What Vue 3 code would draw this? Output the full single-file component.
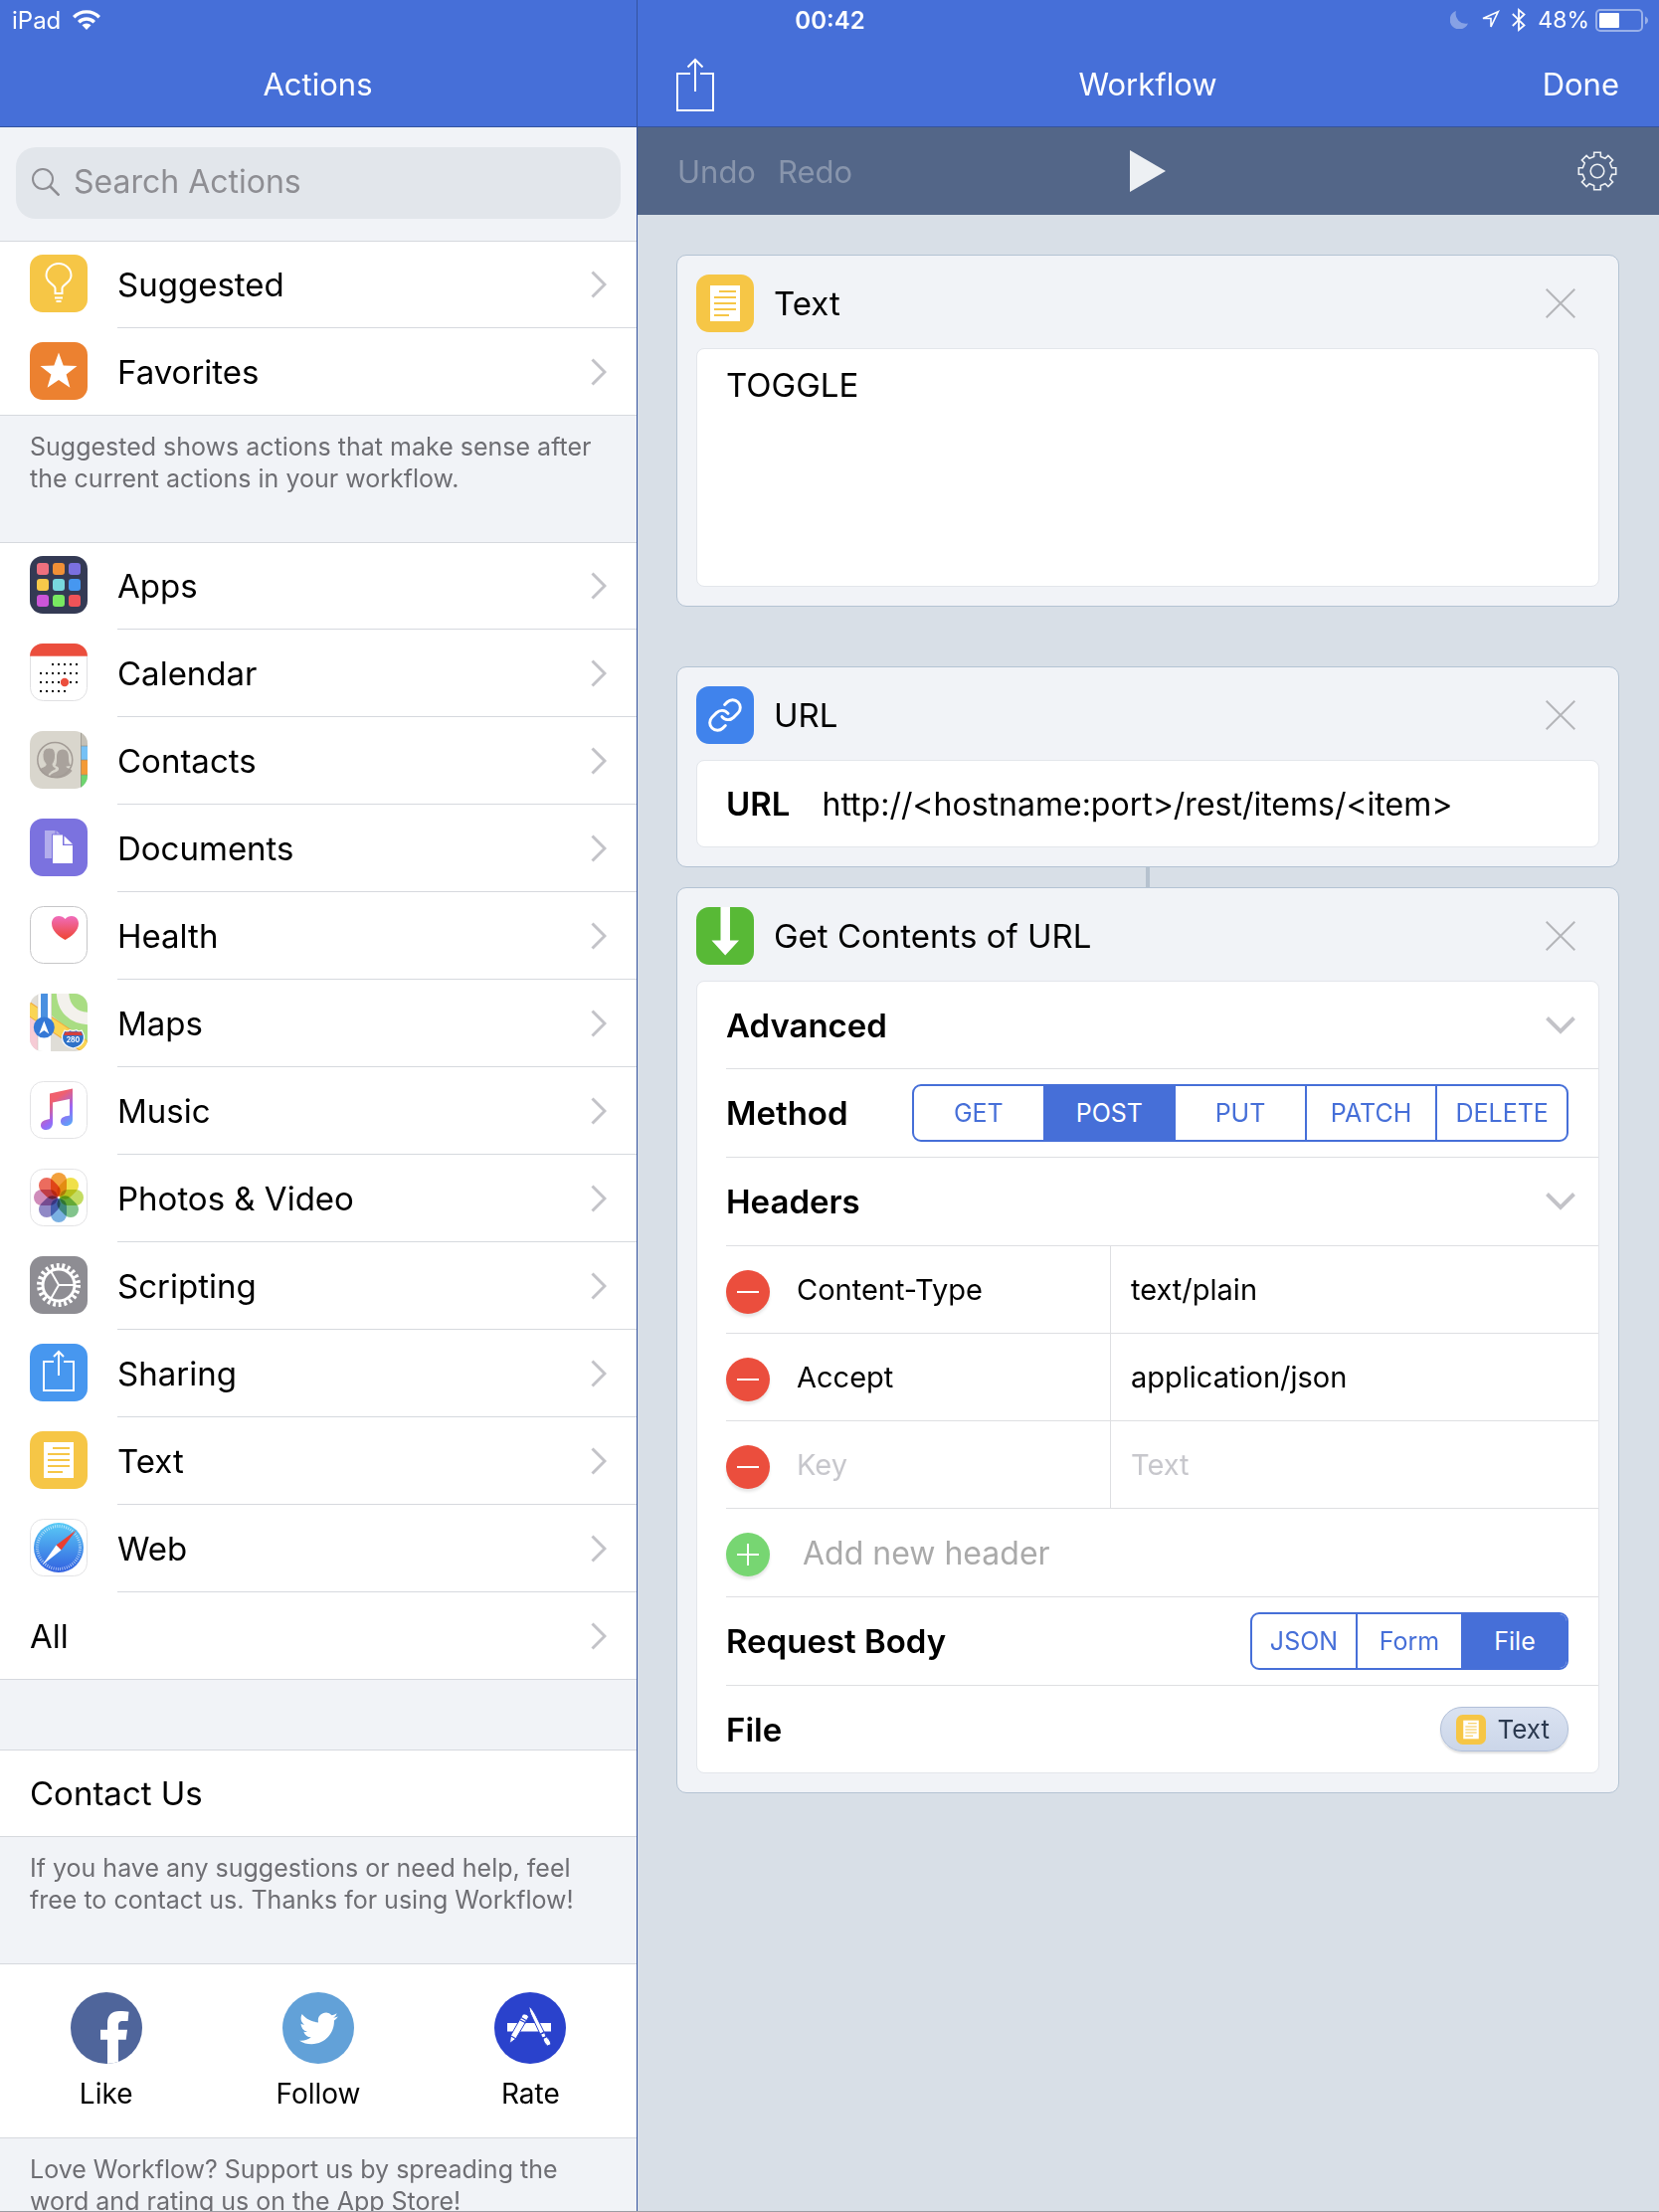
<template>
  <!-- Icon sprite -->
  <svg class="sprite" aria-hidden="true">
    <defs>
      <linearGradient id="g-heart" x1="0" y1="0" x2="0" y2="1">
        <stop offset="0" stop-color="#f06cbc" />
        <stop offset="1" stop-color="#ee4530" />
      </linearGradient>
      <linearGradient id="g-note" x1="0.2" y1="0.1" x2="0.7" y2="1">
        <stop offset="0.25" stop-color="#f0606e" />
        <stop offset="0.65" stop-color="#9a66f5" />
        <stop offset="1" stop-color="#5aa5f8" />
      </linearGradient>
      <linearGradient id="g-safari" x1="0" y1="0" x2="0" y2="1">
        <stop offset="0" stop-color="#5accf6" />
        <stop offset="1" stop-color="#3260e0" />
      </linearGradient>
      <clipPath id="tile"><rect width="58" height="58" rx="13" /></clipPath>
      <clipPath id="disc"><circle cx="36" cy="36" r="36" /></clipPath>
    </defs>

    <symbol id="i-suggested" viewBox="0 0 58 58">
      <rect width="58" height="58" rx="13" fill="#f6c646" />
      <g fill="none" stroke="#fff" stroke-width="2">
        <path d="M25.5 39v-5c0-4-9-5.5-9-13a12.5 12 0 0 1 25 0c0 7.5-9 9-9 13v5z" />
        <path d="M25 43.5h8M26.5 47h5" />
      </g>
    </symbol>
    <symbol id="i-favorites" viewBox="0 0 58 58">
      <rect width="58" height="58" rx="13" fill="#ec8130" />
      <path fill="#fff" d="M29 10.5l4.7 12.9 13.8.5-10.9 8.5 3.8 13.4L29 38l-11.4 7.8 3.8-13.4-10.9-8.5 13.8-.5z" />
    </symbol>
    <symbol id="i-apps" viewBox="0 0 58 58">
      <rect width="58" height="58" rx="13" fill="#343a54" />
      <rect x="7" y="7" width="12" height="12" rx="3" fill="#ef707e" />
      <rect x="23" y="7" width="12" height="12" rx="3" fill="#f09036" />
      <rect x="39" y="7" width="12" height="12" rx="3" fill="#7b70e0" />
      <rect x="7" y="23" width="12" height="12" rx="3" fill="#f7c94a" />
      <rect x="23" y="23" width="12" height="12" rx="3" fill="#78d8de" />
      <rect x="39" y="23" width="12" height="12" rx="3" fill="#4697f0" />
      <rect x="7" y="39" width="12" height="12" rx="3" fill="#cc55d8" />
      <rect x="23" y="39" width="12" height="12" rx="3" fill="#79e861" />
      <rect x="39" y="39" width="12" height="12" rx="3" fill="#ef5358" />
    </symbol>
    <symbol id="i-calendar" viewBox="0 0 58 58">
      <rect x=".5" y=".5" width="57" height="57" rx="13" fill="#fff" stroke="#e0e0e2" />
      <g clip-path="url(#tile)">
        <rect width="58" height="12.7" fill="#eb4e3d" />
      </g>
      <g stroke="#000" stroke-width="2" stroke-dasharray="2 4">
        <path d="M22 21h26" />
        <path d="M10 30h38" />
        <path d="M10 39h38" />
        <path d="M10 48h26" />
      </g>
      <circle cx="35" cy="39" r="4.2" fill="#eb4e3d" />
    </symbol>
    <symbol id="i-contacts" viewBox="0 0 58 58">
      <g clip-path="url(#tile)">
        <rect width="58" height="58" fill="#d9d6cd" />
        <rect x="51" width="7" height="15" fill="#c4c0b6" />
        <rect x="51" y="15" width="7" height="14" fill="#76c1f5" />
        <rect x="51" y="29" width="7" height="15" fill="#f39a36" />
        <rect x="51" y="44" width="7" height="14" fill="#6dd56f" />
        <path d="M51.5 0v58M51 15h7M51 29h7M51 44h7" stroke="#8c8980" stroke-opacity=".6" />
      </g>
      <path fill="#a9a29c" d="M33 18.5c5 0 6 4 6 8 0 5 1 7 2.5 8.5l-5 .5c0 2 5 2 6 4.500A18 18 0 0 1 20 45.500c1-4 8-3.500 9-7 .5-1-.5-3-3.500-3.500 1.500-2 1.500-5 1.500-8.500 0-4 1-8 6-8z" />
      <path fill="#a9a29c" stroke="#d9d6cd" d="M19.500 17c5 0 6 3.500 6 8 0 3-.8 6-2.500 8 0 3 2 3.500 4.500 5-4 2-8 3-9 8-4.500-1.500-7.500-4-9.500-7.500 2-2 6-2.500 7-4 .5-1-.2-2-.7-2.500-1.500-2-2.300-4-2.300-7 0-4.500 1.500-8 6.500-8z" />
      <circle cx="25.3" cy="29" r="17.5" fill="none" stroke="#a39c96" stroke-width="1.5" />
    </symbol>
    <symbol id="i-documents" viewBox="0 0 58 58">
      <rect width="58" height="58" rx="13" fill="#7b72df" />
      <path fill="#fff" fill-opacity=".42" d="M15 12h10.500v3.500H22V40h-7zM26.500 12l4 3.500h-4z" />
      <path fill="#fff" d="M23 16.500h10V27h10v18H23z" />
      <path fill="#fff" d="M34.500 17.500l8.500 8.200h-8.500z" />
    </symbol>
    <symbol id="i-health" viewBox="0 0 58 58">
      <rect x=".5" y=".5" width="57" height="57" rx="13" fill="#fff" stroke="#c6c6c8" />
      <path fill="url(#g-heart)" d="M35.500 34C29 30.500 22 25 22 17.500 22 13 25 10 29 10c2.500 0 5 1 6.500 3 1.500-2 4-3 6.500-3 4 0 7 3 7 7.500C49 25 42 30.500 35.500 34z" />
    </symbol>
    <symbol id="i-maps" viewBox="0 0 58 58">
      <g clip-path="url(#tile)">
        <rect width="58" height="58" fill="#dfddd7" />
        <path fill="#f6cbd5" d="M0 24l8 5v29H0z" />
        <path fill="#a9dd83" d="M22 0h36v52L22 22z" />
        <path fill="none" stroke="#f3f1ec" stroke-width="12.5" d="M33 -2c0 17 11 27 27 27" />
        <path fill="none" stroke="#f0a93a" stroke-width="13" d="M-3 14L58 55" />
        <path fill="none" stroke="#fad554" stroke-width="11" d="M-3 14L58 55" />
        <rect x="8" width="14" height="58" fill="#fff" />
        <rect x="11" width="7" height="32" fill="#4a90e0" />
        <path d="M8 0v58M21.5 0v58" stroke="#c9c7c0" stroke-width=".6" />
      </g>
      <circle cx="14.3" cy="34" r="10.5" fill="#3478d6" />
      <path fill="#fff" d="M14.300 27.500l5 13-5-3.500-5 3.500z" />
      <path fill="#2f72c8" stroke="#fff" stroke-width="1.2" d="M35 37c2 1 4 1 5-.5 2 1 5 1 7 0 1 1.500 3 1.500 5 .5 1 2 3 4 2.500 8-.5 6-6 9-11 10-5-1-10.500-4-11-10-.5-4 1.500-6 2.500-8z" />
      <path fill="#d5403c" d="M35.500 38.500h16l1.500 3.500H34z" />
      <text x="43.5" y="49" text-anchor="middle" font-size="7" font-weight="700" fill="#fff">280</text>
    </symbol>
    <symbol id="i-music" viewBox="0 0 58 58">
      <rect x=".5" y=".5" width="57" height="57" rx="13" fill="#fff" stroke="#e3e3e5" />
      <path fill="url(#g-note)" d="M20 12.500L43 7.500V39c0 3.500-3 6-6.500 6-3 0-5.500-1.500-5.500-4.500 0-3.500 2.500-5 9-6V18l-17 3.500V42c0 4-2.500 7-6.500 7-3.500 0-5.500-2-5.500-4.500 0-4 3-5.500 9-6.500z" />
    </symbol>
    <symbol id="i-photos" viewBox="0 0 58 58">
      <rect x=".5" y=".5" width="57" height="57" rx="13" fill="#fff" stroke="#e3e3e5" />
      <g transform="translate(29 29)">
        <rect
          v-for="(color, i) in petals"
          :key="color"
          class="petal"
          x="-8"
          y="-25"
          width="16"
          height="24"
          rx="8"
          :fill="color"
          :transform="`rotate(${i * 45})`"
        />
      </g>
    </symbol>
    <symbol id="i-scripting" viewBox="0 0 58 58">
      <rect width="58" height="58" rx="13" fill="#8e8d93" />
      <g fill="none" stroke="#fff">
        <circle cx="29" cy="29" r="19.5" stroke-width="5" stroke-dasharray="2.800 2.769" />
        <circle cx="29" cy="29" r="16" stroke-width="3" />
        <path stroke-width="2" d="M29 29h16M29 29l-8-13.900M29 29l-8 13.900" />
      </g>
    </symbol>
    <symbol id="i-sharing" viewBox="0 0 58 58">
      <rect width="58" height="58" rx="13" fill="#4797ef" />
      <path fill="none" stroke="#fff" stroke-width="2" d="M24 18H14v29h30V18H34M29 32V8.500M24 13l5-5 5 5" />
    </symbol>
    <symbol id="i-text" viewBox="0 0 58 58">
      <rect width="58" height="58" rx="13" fill="#f6c646" />
      <path fill="#fff" d="M14 11h30v36H14z" />
      <path stroke="#f6c646" stroke-width="2" d="M23 17h17M18 23h22M18 29h22M18 35h22M18 41h15" />
    </symbol>
    <symbol id="i-web" viewBox="0 0 58 58">
      <rect x=".5" y=".5" width="57" height="57" rx="13" fill="#fff" stroke="#e3e3e5" />
      <circle cx="29" cy="29" r="25" fill="url(#g-safari)" />
      <circle cx="29" cy="29" r="21.5" fill="none" stroke="#fff" stroke-opacity=".75" stroke-width="3" stroke-dasharray=".7 1.552" />
      <path fill="#eb3e31" d="M46.500 11.500L31.500 31.500l-5-5z" />
      <path fill="#fff" d="M12.500 46.500l14-20 5 5z" />
    </symbol>
    <symbol id="i-url" viewBox="0 0 58 58">
      <rect width="58" height="58" rx="13" fill="#4083ec" />
      <g transform="translate(10.5 10.5) scale(1.54)" fill="none" stroke="#fff" stroke-width="1.9" stroke-linecap="round">
        <path d="M10 13a5 5 0 0 0 7.540.54l3-3a5 5 0 0 0-7.070-7.070l-1.720 1.710" />
        <path d="M14 11a5 5 0 0 0-7.540-.54l-3 3a5 5 0 0 0 7.070 7.070l1.710-1.710" />
      </g>
    </symbol>
    <symbol id="i-download" viewBox="0 0 58 58">
      <rect width="58" height="58" rx="13" fill="#58b936" />
      <path fill="#fff" d="M24.500 0h9.500v33.500h9L29.200 48.500 15.500 33.500h9z" />
    </symbol>
    <symbol id="i-facebook" viewBox="0 0 72 72">
      <g clip-path="url(#disc)">
        <rect width="72" height="72" fill="#4f659b" />
        <path fill="#fff" d="M37 72V47.700h-7v-10h7V31c0-8 4.500-12 12-12 4 0 8 .4 9.500.7l-.9 9.300h-4.600c-4 0-5 1.500-5 4.500v4.200h9l-1.300 10H48V72z" />
      </g>
    </symbol>
    <symbol id="i-twitter" viewBox="0 0 72 72">
      <circle cx="36" cy="36" r="36" fill="#62a1d8" />
      <path
        fill="#fff"
        transform="translate(17 17) scale(1.62)"
        d="M23.953 4.570a10 10 0 01-2.825.775 4.958 4.958 0 002.163-2.723c-.951.555-2.005.959-3.127 1.184a4.920 4.920 0 00-8.384 4.482C7.690 8.095 4.067 6.130 1.640 3.162a4.822 4.822 0 00-.666 2.475c0 1.710.87 3.213 2.188 4.096a4.904 4.904 0 01-2.228-.616v.06a4.923 4.923 0 003.946 4.827 4.996 4.996 0 01-2.212.085 4.936 4.936 0 004.604 3.417 9.867 9.867 0 01-6.102 2.105c-.39 0-.779-.023-1.170-.067a13.995 13.995 0 007.557 2.209c9.053 0 13.998-7.496 13.998-13.985 0-.21 0-.42-.015-.63A9.935 9.935 0 0024 4.590z"
      />
    </symbol>
    <symbol id="i-appstore" viewBox="0 0 72 72">
      <circle cx="36" cy="36" r="36" fill="#2a42cc" />
      <path fill="#fff" d="M13 31h44v8.500H13z" />
      <g fill="#fff" stroke="#2a42cc">
        <path d="M35 14c3 3 5 6 7 10l8 16-4 2-8-17c-2-4-3-7-3-11z" />
        <path d="M46.500 42.500l4-2 1.500 4-3.500 1.500zM49 46.500l3.500-1.500c2 1.500 4 4 4.500 7.500l-3.500 1.500c-2.500-2-4-4-4.500-7.500z" />
        <path d="M28.500 22.500c1.500-1.500 5.500 0 6 2.500L21.500 47l-6 4.500 1-8z" />
        <path fill="none" stroke-width="1.2" d="M27 25.500l6 3.500M16 43.500l6 3.500M26 28l6 3" />
      </g>
    </symbol>
  </svg>

  <div class="app">
    <div class="status-bar">
      <div class="status-left">
        <span>iPad</span>
        <svg width="28" height="20" viewBox="0 0 28 20">
          <path fill="#fff" d="M14 20l-4.500-4.700a6.300 6.300 0 0 1 9 0z" />
          <path fill="none" stroke="#fff" stroke-width="3.4" d="M6.200 12.300a11 11 0 0 1 15.600 0M1.200 7.200a18 18 0 0 1 25.600 0" />
        </svg>
      </div>
      <span class="clock">00:42</span>
      <div class="status-right">
        <svg width="18" height="18" viewBox="0 0 18 18">
          <path fill="#fff" fill-opacity=".35" d="M6 0a10 10 0 0 0 12 12.500A9.500 9.500 0 1 1 6 0z" />
        </svg>
        <svg width="20" height="20" viewBox="0 0 20 20">
          <path fill="none" stroke="#fff" stroke-width="1.6" d="M18.300 1.700L3 8.500h8v8.500z" />
        </svg>
        <svg width="14" height="24" viewBox="0 0 14 24">
          <path fill="none" stroke="#fff" stroke-width="1.8" d="M.8 6L12.500 17.500 7 22V2l5.500 4.500L.8 18" />
        </svg>
        <span>48%</span>
        <svg width="53" height="23" viewBox="0 0 53 23">
          <rect x="1" y="1" width="46" height="21" rx="4" fill="none" stroke="#fff" stroke-opacity=".45" stroke-width="2" />
          <rect x="4" y="4" width="20" height="15" rx="1" fill="#fff" />
          <path fill="#fff" fill-opacity=".45" d="M50 7.500c4 1.500 4 6.500 0 8z" />
        </svg>
      </div>
    </div>

    <aside class="sidebar">
      <header class="nav-bar">
        <h1>Actions</h1>
      </header>
      <div class="search">
        <label class="search-box">
          <svg width="28" height="28" viewBox="0 0 28 28">
            <circle cx="11" cy="11" r="10" fill="none" stroke="#8e8e93" stroke-width="2" />
            <path stroke="#8e8e93" stroke-width="2.6" d="M18 18l9.500 9.500" />
          </svg>
          <input v-model="query" type="search" placeholder="Search Actions" aria-label="Search Actions" />
        </label>
      </div>

      <nav class="group">
        <a v-for="item in shortcuts" :key="item.id" class="row" href="#">
          <svg class="tile"><use :href="`#i-${item.id}`" /></svg>
          <span class="row-body">
            {{ item.label }}
            <svg class="chevron" viewBox="0 0 16 28"><path d="M1.500 1.500L14 14 1.500 26.500" /></svg>
          </span>
        </a>
      </nav>
      <p class="note">Suggested shows actions that make sense after the current actions in your workflow.</p>

      <nav class="group">
        <a v-for="item in categories" :key="item.id" class="row" href="#">
          <svg class="tile"><use :href="`#i-${item.id}`" /></svg>
          <span class="row-body">
            {{ item.label }}
            <svg class="chevron" viewBox="0 0 16 28"><path d="M1.500 1.500L14 14 1.500 26.500" /></svg>
          </span>
        </a>
        <a class="row" href="#">
          <span class="row-body">
            All
            <svg class="chevron" viewBox="0 0 16 28"><path d="M1.500 1.500L14 14 1.500 26.500" /></svg>
          </span>
        </a>
      </nav>

      <div class="group contact">
        <a class="row" href="#"><span class="row-body">Contact Us</span></a>
      </div>
      <p class="note">If you have any suggestions or need help, feel free to contact us. Thanks for using Workflow!</p>

      <div class="social">
        <a v-for="s in social" :key="s.icon" href="#">
          <svg><use :href="`#i-${s.icon}`" /></svg>
          {{ s.label }}
        </a>
      </div>
      <p class="note">Love Workflow? Support us by spreading the word and rating us on the App Store!</p>
    </aside>

    <main class="editor">
      <header class="nav-bar">
        <button class="nav-btn" aria-label="Share">
          <svg width="38" height="54" viewBox="0 0 38 54">
            <path fill="none" stroke="#fff" stroke-width="2" d="M14 16H1v37h36V16H24M19 34V2M11.500 9.500L19 2l7.500 7.500" />
          </svg>
        </button>
        <h1>Workflow</h1>
        <button class="nav-btn">Done</button>
      </header>
      <div class="toolbar">
        <div class="history">
          <button disabled>Undo</button>
          <button disabled>Redo</button>
        </div>
        <button aria-label="Run">
          <svg width="36" height="42" viewBox="0 0 36 42"><path fill="#edf0f3" d="M0 0l36 21L0 42z" /></svg>
        </button>
        <button class="settings" aria-label="Settings">
          <svg width="40" height="40" viewBox="0 0 40 40">
            <g fill="none" stroke="#edf0f3" stroke-width="1.6">
              <path :d="gearPath" />
              <circle cx="20" cy="20" r="6.8" />
            </g>
          </svg>
        </button>
      </div>

      <div class="canvas">
        <section class="card">
          <header>
            <svg class="tile"><use href="#i-text" /></svg>
            <h2>Text</h2>
            <button class="close" aria-label="Remove Text">
              <svg viewBox="0 0 30 30"><path d="M.7.7l28.600 28.600M29.300.7L.7 29.300" /></svg>
            </button>
          </header>
          <textarea v-model="text" class="panel" aria-label="Text"></textarea>
        </section>

        <section class="card spaced">
          <header>
            <svg class="tile"><use href="#i-url" /></svg>
            <h2>URL</h2>
            <button class="close" aria-label="Remove URL">
              <svg viewBox="0 0 30 30"><path d="M.7.7l28.600 28.600M29.300.7L.7 29.300" /></svg>
            </button>
          </header>
          <div class="panel">
            <div class="field">
              <label for="url">URL</label>
              <input id="url" v-model="url" type="text" />
            </div>
          </div>
        </section>

        <div class="connector"></div>

        <section class="card">
          <header>
            <svg class="tile"><use href="#i-download" /></svg>
            <h2>Get Contents of URL</h2>
            <button class="close" aria-label="Remove Get Contents of URL">
              <svg viewBox="0 0 30 30"><path d="M.7.7l28.600 28.600M29.300.7L.7 29.300" /></svg>
            </button>
          </header>
          <div class="panel">
            <button class="field">
              <b>Advanced</b>
              <svg class="expand" viewBox="0 0 30 18"><path d="M1.500 1.500L15 15 28.500 1.500" /></svg>
            </button>
            <div class="field tall">
              <b>Method</b>
              <div class="segmented" role="radiogroup" aria-label="Method">
                <label v-for="m in methods" :key="m">
                  <input v-model="method" type="radio" name="method" :value="m" />
                  <span>{{ m }}</span>
                </label>
              </div>
            </div>
            <button class="field tall">
              <b>Headers</b>
              <svg class="expand" viewBox="0 0 30 18"><path d="M1.500 1.500L15 15 28.500 1.500" /></svg>
            </button>
            <div v-for="(h, i) in headers" :key="i" class="field pair">
              <button class="round remove" aria-label="Remove header" @click="removeHeader(i)">
                <svg viewBox="0 0 44 44"><path d="M11 22h22" /></svg>
              </button>
              <input v-model="h.key" type="text" class="key" placeholder="Key" aria-label="Key" />
              <input v-model="h.value" type="text" class="value" placeholder="Text" aria-label="Text" />
            </div>
            <button class="field tall add" @click="addHeader">
              <span class="round">
                <svg viewBox="0 0 44 44"><path d="M11 22h22M22 11v22" /></svg>
              </span>
              Add new header
            </button>
            <div class="field tall">
              <b>Request Body</b>
              <div class="segmented small" role="radiogroup" aria-label="Request Body">
                <label v-for="b in bodies" :key="b">
                  <input v-model="body" type="radio" name="body" :value="b" />
                  <span>{{ b }}</span>
                </label>
              </div>
            </div>
            <div class="field">
              <b>File</b>
              <button class="token">
                <svg><use href="#i-text" /></svg>
                Text
              </button>
            </div>
          </div>
        </section>
      </div>
    </main>
  </div>
</template>

<script setup>
import { ref } from 'vue'

const query = ref('')
const text = ref('TOGGLE')
const url = ref('http://<hostname:port>/rest/items/<item>')

const shortcuts = [
  { id: 'suggested', label: 'Suggested' },
  { id: 'favorites', label: 'Favorites' }
]

const categories = [
  { id: 'apps', label: 'Apps' },
  { id: 'calendar', label: 'Calendar' },
  { id: 'contacts', label: 'Contacts' },
  { id: 'documents', label: 'Documents' },
  { id: 'health', label: 'Health' },
  { id: 'maps', label: 'Maps' },
  { id: 'music', label: 'Music' },
  { id: 'photos', label: 'Photos & Video' },
  { id: 'scripting', label: 'Scripting' },
  { id: 'sharing', label: 'Sharing' },
  { id: 'text', label: 'Text' },
  { id: 'web', label: 'Web' }
]

const social = [
  { icon: 'facebook', label: 'Like' },
  { icon: 'twitter', label: 'Follow' },
  { icon: 'appstore', label: 'Rate' }
]

const methods = ['GET', 'POST', 'PUT', 'PATCH', 'DELETE']
const method = ref('POST')
const bodies = ['JSON', 'Form', 'File']
const body = ref('File')

const headers = ref([
  { key: 'Content-Type', value: 'text/plain' },
  { key: 'Accept', value: 'application/json' },
  { key: '', value: '' }
])

function addHeader() {
  headers.value.push({ key: '', value: '' })
}

function removeHeader(index) {
  headers.value.splice(index, 1)
}

// Photos icon, clockwise from the top
const petals = ['#f2a03c', '#f0e04a', '#c3dc62', '#82c48c', '#7ab0e2', '#9089c6', '#cf8cba', '#ec6c5e']

// Settings gear: 8 square teeth around a 40x40 box
const gearPath = buildGear(8, 19, 15)

function buildGear(teeth, outer, inner) {
  const points = []
  for (let i = 0; i < teeth; i++) {
    const mid = (i * 360) / teeth - 90
    for (const [offset, radius] of [[-13, inner], [-10, outer], [10, outer], [13, inner]]) {
      const a = ((mid + offset) * Math.PI) / 180
      points.push(`${(20 + radius * Math.cos(a)).toFixed(2)} ${(20 + radius * Math.sin(a)).toFixed(2)}`)
    }
  }
  return `M${points.join('L')}z`
}
</script>

<style>
body {
  margin: 0;
}
</style>

<style scoped>
* {
  box-sizing: border-box;
}

.sprite {
  position: absolute;
  width: 0;
  height: 0;
}
.petal {
  mix-blend-mode: multiply;
}

.app {
  position: relative;
  display: grid;
  grid-template-columns: 641px 1fr;
  height: 100vh;
  overflow: hidden;
  border-bottom: 1px solid #9b9da3;
  font-family: Inter, 'Liberation Sans', sans-serif;
  font-size: 33px;
  color: #000;
}
button,
input,
textarea {
  font: inherit;
  color: inherit;
  background: none;
  border: none;
  border-radius: 0;
  padding: 0;
  margin: 0;
  outline: none;
  appearance: none;
}
a {
  color: inherit;
  text-decoration: none;
}
svg {
  display: block;
  flex: none;
}
h1,
h2 {
  margin: 0;
  font-size: inherit;
  font-weight: 400;
}
b {
  font-weight: 600;
}

/* Status bar lies over both nav bars */
.status-bar {
  position: absolute;
  top: 0;
  left: 0;
  right: 0;
  height: 40px;
  padding: 0 11px 0 12px;
  display: grid;
  grid-template-columns: 1fr auto 1fr;
  align-items: center;
  color: #fff;
  font-size: 24px;
}
.status-left,
.status-right {
  display: flex;
  align-items: center;
  gap: 12px;
}
.status-right {
  justify-content: flex-end;
  font-size: 23px;
}
.status-right span {
  margin-right: -6px;
}
.clock {
  font-weight: 600;
}

.nav-bar {
  display: flex;
  align-items: center;
  justify-content: center;
  height: 128px;
  padding: 42px 40px 0 39px;
  background: #466fd8;
  border-bottom: 1px solid #34539f;
  font-size: 31px;
  color: #fff;
}

/* Sidebar */
.sidebar {
  background: #f1f3f7;
  border-right: 1px solid #34539f;
  overflow: hidden;
}
.search {
  padding: 20px 16px 22px;
}
.search-box {
  display: flex;
  align-items: center;
  gap: 14px;
  height: 72px;
  padding: 0 16px 3px;
  border-radius: 20px;
  background: #e2e6eb;
  font-size: 32px;
}
.search-box input {
  flex: 1;
  min-width: 0;
}
.search-box input::placeholder {
  color: #8e8e93;
}
.group {
  background: #fff;
}
.row {
  display: flex;
  align-items: center;
  gap: 30px;
  height: 88px;
  padding-left: 30px;
}
.row:first-child {
  box-shadow: inset 0 1px #d6d9de;
}
.row-body {
  flex: 1;
  align-self: stretch;
  display: flex;
  align-items: center;
  justify-content: space-between;
  padding-right: 30px;
  border-bottom: 1px solid #d6d9de;
}
.row:last-child {
  border-bottom: 1px solid #d6d9de;
}
.row:last-child .row-body {
  border-bottom: none;
}
.tile {
  width: 58px;
  height: 58px;
}
.row .tile {
  margin-bottom: 2px;
}
.chevron {
  width: 16px;
  height: 28px;
}
.chevron path,
.expand path {
  fill: none;
  stroke: #c3c3c8;
  stroke-width: 3;
}
.note {
  height: 127px;
  margin: 0;
  padding: 15px 30px 0;
  font-size: 25px;
  line-height: 32px;
  color: #6e6e73;
}
.contact {
  margin-top: 70px;
}
.social {
  display: grid;
  grid-template-columns: repeat(3, 1fr);
  height: 176px;
  padding-top: 28px;
  background: #fff;
  border-top: 1px solid #d6d9de;
  border-bottom: 1px solid #d6d9de;
  font-size: 28px;
}
.social a {
  display: flex;
  flex-direction: column;
  align-items: center;
  gap: 14px;
  line-height: 32px;
}
.social svg {
  width: 72px;
  height: 72px;
}

/* Editor */
.editor {
  display: flex;
  flex-direction: column;
  min-width: 0;
  background: #d8dfe7;
}
.editor .nav-bar,
.toolbar {
  flex: none;
  display: grid;
  grid-template-columns: 1fr auto 1fr;
  align-items: center;
}
.nav-btn:last-child,
.settings {
  justify-self: end;
}
.nav-btn:first-child {
  justify-self: start;
}
.toolbar {
  height: 88px;
  padding: 0 42px 0 40px;
  background: #536688;
  font-size: 31px;
}
.history {
  display: flex;
  gap: 22px;
  color: #8895ac;
}
.canvas {
  flex: 1;
  padding: 40px 40px 40px 39px;
  overflow: hidden;
}
.card {
  padding: 0 19px 19px;
  background: #f1f3f7;
  border: 1px solid #b4c3d3;
  border-radius: 10px;
}
.card.spaced {
  margin-top: 60px;
}
.card header {
  display: flex;
  align-items: center;
  gap: 20px;
  height: 93px;
  padding-top: 3px;
}
.card h2 {
  flex: 1;
}
.close {
  padding: 0 24px;
}
.close svg {
  width: 30px;
  height: 30px;
}
.close path {
  fill: none;
  stroke: #b4b5b9;
  stroke-width: 2;
}
.panel {
  display: block;
  width: 100%;
  background: #fff;
  border: 1px solid #e3e6eb;
  border-radius: 8px;
  overflow: hidden;
}
textarea.panel {
  height: 240px;
  padding: 16px 29px;
  line-height: 40px;
  resize: none;
}
.connector {
  width: 4px;
  height: 20px;
  margin: 0 auto;
  background: #b6c2cf;
}
.field {
  display: flex;
  align-items: center;
  justify-content: space-between;
  width: calc(100% - 29px);
  height: 88px;
  margin-left: 29px;
  padding-right: 30px;
  border-bottom: 1px solid #dedfe2;
  text-align: left;
}
.field.tall {
  height: 89px;
}
.field:last-child {
  height: 87px;
  border-bottom: none;
}
.field:only-child {
  height: 86px;
}
.field label[for] {
  font-weight: 600;
}
.field > #url {
  flex: 1;
  min-width: 0;
  margin-left: 32px;
  font-size: 32px;
}
.expand {
  width: 30px;
  height: 18px;
}
.field:has(.expand) {
  padding-right: 23px;
}
.expand path {
  stroke-width: 4;
}
.segmented {
  display: flex;
  width: 660px;
  height: 58px;
  border: 2px solid #466fd8;
  border-radius: 9px;
  overflow: hidden;
  font-size: 25px;
}
.segmented.small {
  width: 320px;
}
.segmented label {
  position: relative;
  flex: 1;
}
.segmented label + label {
  border-left: 2px solid #466fd8;
}
.segmented input {
  position: absolute;
  inset: 0;
  opacity: 0;
}
.segmented span {
  display: flex;
  align-items: center;
  justify-content: center;
  height: 100%;
  color: #466fd8;
}
.segmented input:checked + span {
  background: #466fd8;
  color: #fff;
}
.pair {
  padding-right: 0;
  font-size: 29px;
}
.pair input {
  height: 100%;
}
.pair input::placeholder {
  color: #c7c7cc;
}
.pair .key {
  flex: none;
  width: 342px;
  padding-left: 27px;
}
.pair .value {
  flex: 1;
  min-width: 0;
  padding-left: 20px;
  border-left: 1px solid #dedfe2;
}
.round {
  flex: none;
  width: 44px;
  height: 44px;
  margin-top: 4px;
  border-radius: 50%;
  background: #77d672;
  box-shadow: 0 3px 3px rgba(0, 0, 0, 0.1);
}
.round.remove {
  background: #eb4e3d;
}
.round svg {
  width: 44px;
  height: 44px;
}
.round path {
  stroke: #fff;
  stroke-width: 2;
}
.add {
  justify-content: flex-start;
  gap: 33px;
  font-size: 32px;
  color: #aaa;
}
.token {
  display: flex;
  align-items: center;
  gap: 11px;
  height: 45px;
  padding: 0 18px 0 15px;
  border: 1px solid #b1bfd8;
  border-radius: 22px;
  background: linear-gradient(#dae2f1, #cbd6e9);
  box-shadow: 0 2px 2px rgba(0, 0, 0, 0.12);
  font-size: 26px;
  color: #2c3a50;
}
.token svg {
  width: 30px;
  height: 30px;
}
</style>
